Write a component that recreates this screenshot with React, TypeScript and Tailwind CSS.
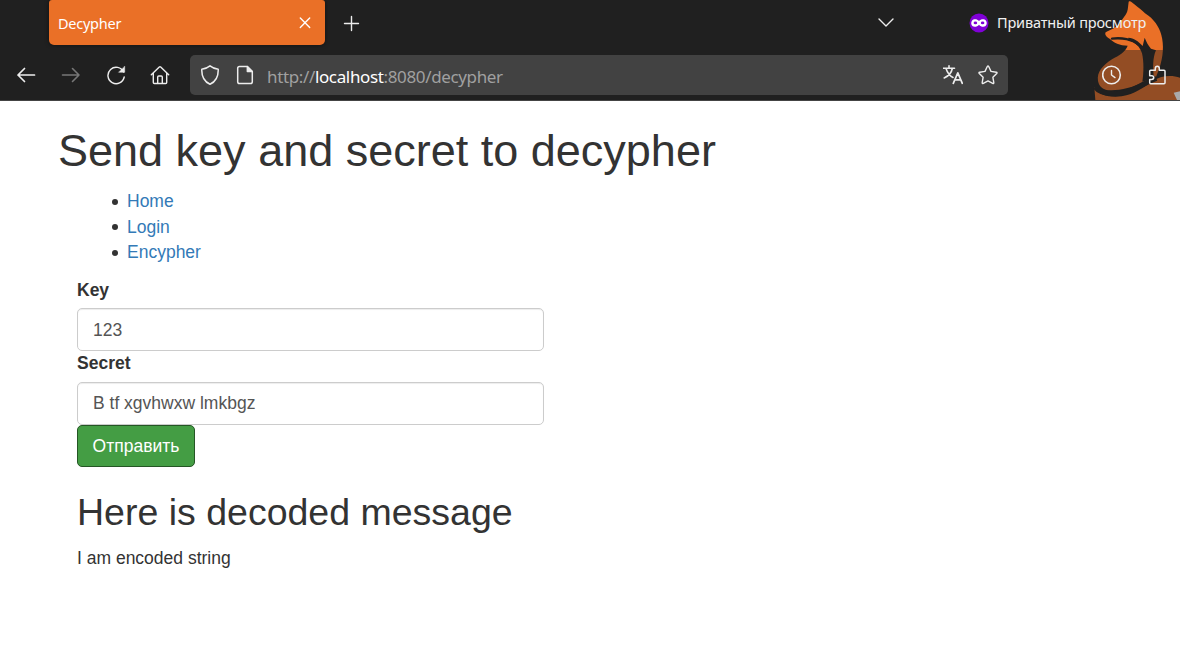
import React from "react";

type IconProps = { className?: string; children: React.ReactNode };

function Icon({ className = "", children }: IconProps) {
  return (
    <svg
      viewBox="0 0 20 20"
      className={`h-5 w-5 shrink-0 ${className}`}
      fill="none"
      stroke="currentColor"
      strokeWidth="1.4"
      strokeLinecap="round"
      strokeLinejoin="round"
    >
      {children}
    </svg>
  );
}

function Fox() {
  const shapes = (
    <>
      <path d="M146 5C150 1 156 7 163 13C175 23 188 32 195 40C222 57 237 80 244 105C252 135 250 170 238 205L226 236L188 247C160 262 120 272 90 271C72 271 58 262 54 243C50 215 68 197 96 178C118 165 136 157 143 137C120 137 100 128 90 117C80 113 73 103 77 97C92 89 112 82 122 66C131 51 143 42 144 22Z" />
      <path d="M43 262C55 286 92 294 125 289C165 284 190 262 217 244C240 228 272 224 300 233V300H46Z" />
    </>
  );
  return (
    <svg viewBox="0 0 300 300" className="absolute right-0 top-0 h-[100px] w-[100px]">
      <g fill="#ea7027">{shapes}</g>
      <path d="M0 150H300V300H0Z" fill="#202020" fillOpacity=".43" />
      <g fill="none" stroke="#202020" strokeLinejoin="round">
        <path d="M96 116C125 112 157 118 175 134" strokeWidth="7" strokeLinecap="round" />
        <path d="M46 262C64 286 121 287 160 268C184 256 208 243 229 235" strokeWidth="15" />
      </g>
      <path d="M145 113C162 115 174 122 188 138L194 113C199 126 205 136 213 146L228 151C218 173 218 203 222 235L187 245C191 222 192 184 186 160C180 141 168 128 145 121Z" fill="#202020" />
      <path d="M281 278L300 274V300H291Z" fill="#aaa" />
    </svg>
  );
}

function TabStrip() {
  return (
    <div className="flex h-[50px] items-start pl-[49px] text-[#ededed]">
      <div className="flex h-[45px] w-[276px] items-center justify-between rounded-b-[5px] rounded-t-[3px] bg-[#ea7027] pl-[9px] pr-[10px] text-white shadow-[0_0_4px_#0008]">
        <span className="pt-[2px] font-['Noto_Sans','Open_Sans',sans-serif] text-[14.5px] tracking-[-0.25px]">Decypher</span>
        <Icon><path d="m5.300 5 9.400 9.400m0-9.400-9.400 9.400" /></Icon>
      </div>
      <Icon className="ml-[16px] mt-[13px]"><path d="M10.500 3.500v14M3.500 10.500h14" /></Icon>
      <Icon className="ml-[515px] mt-[12px]"><path d="m3 7 7 7 7-7" /></Icon>
      <svg viewBox="0 0 20 20" className="ml-[73px] mt-[13px] h-5 w-5 shrink-0">
        <circle cx="10" cy="10" r="9.5" fill="#8000d7" />
        <path d="M10 8C8 5.800 4.500 5.800 3 7.800c-1.700 2.400-.4 6 2.700 6 1.800 0 3-.7 4.300-2.100 1.300 1.400 2.500 2.100 4.300 2.100 3.100 0 4.400-3.600 2.700-6C15.500 5.800 12 5.800 10 8Z" fill="#fff" />
        <ellipse cx="6.400" cy="9.900" rx="1.800" ry="1.400" fill="#8000d7" />
        <ellipse cx="13.600" cy="9.900" rx="1.800" ry="1.400" fill="#8000d7" />
      </svg>
      <span className="ml-[8px] mt-[11px] whitespace-nowrap font-['Noto_Sans','Open_Sans',sans-serif] text-[14.5px] leading-[22px] tracking-[-0.18px] text-[#f0f0f0]">Приватный просмотр</span>
    </div>
  );
}

function Toolbar() {
  return (
    <div className="flex h-[50px] items-center pl-4 text-[#ededed]">
      <Icon><path d="M18.500 10H2m6.500-6.500L2 10l6.500 6.500" strokeWidth="1.700" /></Icon>
      <Icon className="ml-[25px] text-[#777]"><path d="M1.500 10H18m-6.500-6.500L18 10l-6.500 6.500" strokeWidth="1.600" /></Icon>
      <Icon className="ml-[25px]">
        <path d="M17.600 7A8.200 8.200 0 1 0 18.200 12" />
        <path d="M18.700 1.500v5.800h-5.800Z" fill="currentColor" strokeWidth=".5" />
      </Icon>
      <Icon className="ml-[24px]">
        <path d="m1.300 9.800 8-7.800q.7-.7 1.400 0l8 7.800M3.300 8.200v9.200q0 1.100 1 1.100h11.400q1 0 1-1.100V8.200M7.700 18.300V12q0-1 1-1h2.600q1 0 1 1v6.300" />
      </Icon>
      <div className="ml-[20px] flex h-10 w-[818px] items-center rounded-[5px] bg-[#424242] pl-[10px] pr-[10px]">
        <Icon><path d="M10 .8q-3.500 2.800-8.200 3.400C1.500 11 4.600 16.800 10 19.200c5.400-2.400 8.500-8.200 8.200-15Q13.500 3.600 10 .8Z" strokeWidth="1.500" /></Icon>
        <Icon className="ml-[15px]">
          <path d="M12.300 1.500H4.500Q2.700 1.500 2.700 3.300v13.400q0 1.800 1.800 1.800h11q1.800 0 1.800-1.800V6.500Z" strokeWidth="1.500" />
          <path d="M12.300 1.500v5h5Z" fill="currentColor" />
        </Icon>
        <span className="ml-[12px] mt-[3px] flex-1 font-['Noto_Sans','Open_Sans',sans-serif] text-[17px] tracking-[-0.36px] text-[#a0a0a0]">
          http://<span className="text-white">localhost</span>:8080/decypher
        </span>
        <Icon>
          <path d="M.5 3.300h11M6 .8v2.500M3 3.500C4.500 8 7 11 10 12.500M9.300 3.500C8.500 8 5.500 11 1.200 13" strokeWidth="1.600" />
          <path d="m10.300 18.300 4.500-10.500 4.500 10.500m-7.500-3.500h6" strokeWidth="1.700" />
        </Icon>
        <Icon className="ml-[15px]"><path d="M9.300 1.500q.7-1.200 1.400 0l2.300 4.900 5.300.8q1.300.3.4 1.300l-3.800 3.800.9 5.300q.1 1.300-1.100.8L10 15.900l-4.700 2.500q-1.200.5-1.100-.8l.9-5.300L1.300 8.500q-.9-1 .4-1.300l5.300-.8Z" /></Icon>
      </div>
      <Icon className="ml-[94px]"><circle cx="9.500" cy="10" r="8.800" strokeWidth="1.600" /><path d="M9.500 5.500V10l3.500 2.600" /></Icon>
      <Icon className="ml-[26px]"><path d="M1.700 7.500V6.300q0-1 1-1h4.600V3.500q0-2.300 2-2.300t2 2.300v1.800H16q1 0 1 1v11.400q0 1-1 1H2.700q-1 0-1-1v-3.200h2q2 0 2-1.900t-2-1.900h-2Z" strokeWidth="1.500" /></Icon>
    </div>
  );
}

const links = ["Home", "Login", "Encypher"];

type FieldProps = { id: string; label: string; value: string; labelClass: string; inputClass: string };

function Field({ id, label, value, labelClass, inputClass }: FieldProps) {
  return (
    <div className="w-[467px]">
      <label htmlFor={id} className={`block font-bold leading-[25px] ${labelClass}`}>{label}</label>
      <input
        id={id}
        defaultValue={value}
        className={`block h-[43px] w-full rounded-[5px] border border-[#ccc] bg-white px-[15px] text-[#555] shadow-[inset_0_1px_1px_#00000013] outline-none ${inputClass}`}
      />
    </div>
  );
}

export default function App() {
  return (
    <div className="h-[660px] w-[1180px] overflow-hidden bg-white font-['Liberation_Sans',Arial,sans-serif] text-[17.5px] text-[#333]">
      <header className="relative h-[101px] border-b border-[#444] bg-[#202020]">
        <Fox />
        <div className="relative">
          <TabStrip />
          <Toolbar />
        </div>
      </header>
      <main className="pl-[58px] pt-[25px]">
        <h1 className="text-[45px] leading-[50px]">Send key and secret to decypher</h1>
        <ul className="mt-[13px] pl-[54px] leading-[25.500px]">
          {links.map((name) => (
            <li key={name} className="flex items-center">
              <span className="mr-[9px] h-[6px] w-[6px] rounded-full bg-[#333]" />
              <a href="#" className="text-[#337ab7]">{name}</a>
            </li>
          ))}
        </ul>
        <form className="ml-[19px] mt-[12.500px]">
          <Field id="key" label="Key" value="123" labelClass="h-[30px]" inputClass="pt-px" />
          <Field id="secret" label="Secret" value="B tf xgvhwxw lmkbgz" labelClass="h-[31px]" inputClass="pb-px" />
          <button type="button" className="block h-[42px] w-[118px] rounded-[5px] border border-[#255625] bg-[#449d44] text-white">Отправить</button>
        </form>
        <section className="ml-[19px] mt-[24px]">
          <h2 className="text-[37.5px] leading-[42px]">Here is decoded message</h2>
          <p className="mt-[13px] leading-[25px]">I am encoded string</p>
        </section>
      </main>
    </div>
  );
}
